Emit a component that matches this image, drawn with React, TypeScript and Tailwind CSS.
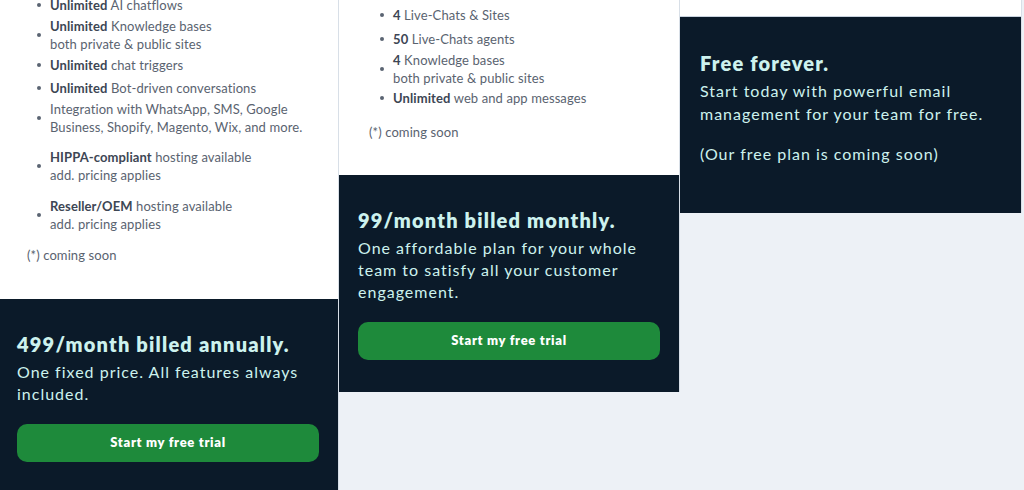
import React from "react";

const font = { fontFamily: "Lato, 'Noto Sans', sans-serif" };

type Item = { b?: string; t: string; t2?: string; mt: string };

function Bullet({ item }: { item: Item }) {
  return (
    <li className={`flex items-center ${item.mt}`}>
      <span className="w-[4px] h-[4px] rounded-full bg-[#5a6472] shrink-0" />
      <div className="ml-[9px] leading-[18px]">
        <div>
          {item.b && <span className="font-bold text-[#3d4654]">{item.b}</span>}
          {item.b ? " " : ""}
          {item.t}
        </div>
        {item.t2 && <div>{item.t2}</div>}
      </div>
    </li>
  );
}

const col1: Item[] = [
  { b: "Unlimited", t: "AI chatflows", mt: "mt-0" },
  { b: "Unlimited", t: "Knowledge bases", t2: "both private & public sites", mt: "mt-[3px]" },
  { b: "Unlimited", t: "chat triggers", mt: "mt-[3px]" },
  { b: "Unlimited", t: "Bot-driven conversations", mt: "mt-[5px]" },
  { t: "Integration with WhatsApp, SMS, Google", t2: "Business, Shopify, Magento, Wix, and more.", mt: "mt-[3px]" },
  { b: "HIPPA-compliant", t: "hosting available", t2: "add. pricing applies", mt: "mt-[12px]" },
  { b: "Reseller/OEM", t: "hosting available", t2: "add. pricing applies", mt: "mt-[13px]" },
];

const col2: Item[] = [
  { b: "Unlimited", t: "chat triggers", mt: "mt-0" },
  { b: "4", t: "Live-Chats & Sites", mt: "mt-[4px]" },
  { b: "50", t: "Live-Chats agents", mt: "mt-[6px]" },
  { b: "4", t: "Knowledge bases", t2: "both private & public sites", mt: "mt-[3px]" },
  { b: "Unlimited", t: "web and app messages", mt: "mt-[2px]" },
];

function Button() {
  return (
    <button className="w-full h-[38px] rounded-[10px] bg-[#1e8a3b] text-white font-extrabold tracking-[0.7px] text-[13px] flex items-center justify-center">
      Start my free trial
    </button>
  );
}

const title = "text-[20px] leading-[26px] font-extrabold tracking-[1.2px] text-[#cdf2ee]";
const sub = "text-[16px] tracking-[1px] text-[#cdf2ee]";

export default function App() {
  return (
    <div className="w-[1024px] h-[490px] bg-[#edf1f6] flex items-start overflow-hidden text-[13px] tracking-[0.1px] text-[#5a6370]" style={font}>
      {/* Column 1 */}
      <div className="w-[339px] h-[490px] flex flex-col border-r border-[#c9d3de]/60 shrink-0">
        <div className="bg-white h-[299px] pl-[37px]">
          <ul className="-mt-[4px]">
            {col1.map((it, i) => (
              <Bullet key={i} item={it} />
            ))}
          </ul>
          <div className="mt-[13px] -ml-[10px] leading-[18px]">(*) coming soon</div>
        </div>
        <div className="bg-[#0b1a29] flex-1 px-[17px] pt-[32px] pr-[19px]">
          <div className={title}>499/month billed annually.</div>
          <div className={`mt-[4px] leading-[22px] ${sub}`}>One fixed price. All features always included.</div>
          <div className="mt-[19px]">
            <Button />
          </div>
        </div>
      </div>
      {/* Column 2 */}
      <div className="w-[341px] flex flex-col border-r border-[#c9d3de]/60 shrink-0">
        <div className="bg-white h-[175px] pl-[41px]">
          <ul className="-mt-[16px]">
            {col2.map((it, i) => (
              <Bullet key={i} item={it} />
            ))}
          </ul>
          <div className="mt-[16px] -ml-[11px] leading-[18px]">(*) coming soon</div>
        </div>
        <div className="bg-[#0b1a29] h-[217px] pl-[19px] pr-[19px] pt-[32px]">
          <div className={title}>99/month billed monthly.</div>
          <div className={`mt-[4px] leading-[22px] ${sub}`}>
            One affordable plan for your whole team to satisfy all your customer engagement.
          </div>
          <div className="mt-[19px]">
            <Button />
          </div>
        </div>
      </div>
      {/* Column 3 */}
      <div className="w-[342px] flex flex-col border-r border-[#c9d3de]/60 shrink-0">
        <div className="bg-white h-[17px] border-b border-[#c9d3de]" />
        <div className="bg-[#0b1a29] h-[196px] pl-[20px] pr-[20px] pt-[33px]">
          <div className={title}>Free forever.</div>
          <div className={`mt-[3px] leading-[23px] ${sub}`}>
            Start today with powerful email management for your team for free.
          </div>
          <div className={`mt-[17px] leading-[23px] ${sub}`}>(Our free plan is coming soon)</div>
        </div>
      </div>
    </div>
  );
}
